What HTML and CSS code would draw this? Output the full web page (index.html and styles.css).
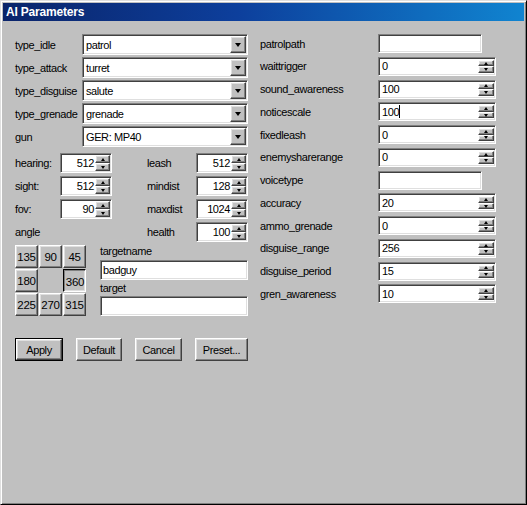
FILE: index.html
```html
<!DOCTYPE html>
<html>
<head>
<meta charset="utf-8">
<title>AI Parameters</title>
<link rel="stylesheet" href="styles.css">
</head>
<body>
<div class="window">
  <div class="titlebar">AI Parameters</div>
  <div class="content">
    <div class="left">
      <div class="combos">
        <span class="lbl">type_idle</span>
        <div class="combo"><span class="val">patrol</span><span class="dd"><i class="tri"></i></span></div>
        <span class="lbl">type_attack</span>
        <div class="combo"><span class="val">turret</span><span class="dd"><i class="tri"></i></span></div>
        <span class="lbl">type_disguise</span>
        <div class="combo"><span class="val">salute</span><span class="dd"><i class="tri"></i></span></div>
        <span class="lbl">type_grenade</span>
        <div class="combo"><span class="val">grenade</span><span class="dd"><i class="tri"></i></span></div>
        <span class="lbl">gun</span>
        <div class="combo"><span class="val">GER: MP40</span><span class="dd"><i class="tri"></i></span></div>
      </div>

      <div class="spins">
        <span class="lbl">hearing:</span>
        <div class="spin"><span class="num">512</span><span class="ud"><b><i class="up"></i></b><b><i class="down"></i></b></span></div>
        <span class="lbl c4">leash</span>
        <div class="spin"><span class="num">512</span><span class="ud"><b><i class="up"></i></b><b><i class="down"></i></b></span></div>

        <span class="lbl">sight:</span>
        <div class="spin"><span class="num">512</span><span class="ud"><b><i class="up"></i></b><b><i class="down"></i></b></span></div>
        <span class="lbl c4">mindist</span>
        <div class="spin"><span class="num">128</span><span class="ud"><b><i class="up"></i></b><b><i class="down"></i></b></span></div>

        <span class="lbl">fov:</span>
        <div class="spin"><span class="num">90</span><span class="ud"><b><i class="up"></i></b><b><i class="down"></i></b></span></div>
        <span class="lbl c4">maxdist</span>
        <div class="spin"><span class="num">1024</span><span class="ud"><b><i class="up"></i></b><b><i class="down"></i></b></span></div>

        <span class="lbl">angle</span>
        <span class="lbl c4">health</span>
        <div class="spin"><span class="num">100</span><span class="ud"><b><i class="up"></i></b><b><i class="down"></i></b></span></div>
      </div>

      <div class="lower">
        <div class="angles">
          <span class="abtn">135</span>
          <span class="abtn">90</span>
          <span class="abtn">45</span>
          <span class="abtn">180</span>
          <span class="gap"></span>
          <span class="abtn pressed">360</span>
          <span class="abtn">225</span>
          <span class="abtn">270</span>
          <span class="abtn">315</span>
        </div>
        <div class="targets">
          <span class="tlbl first">targetname</span>
          <div class="edit"><span class="txt">badguy</span></div>
          <span class="tlbl">target</span>
          <div class="edit"></div>
        </div>
      </div>

      <div class="buttons">
        <span class="btn default w-apply"><span class="in">Apply</span></span>
        <span class="btn w-default">Default</span>
        <span class="btn w-cancel">Cancel</span>
        <span class="btn w-preset">Preset...</span>
      </div>
    </div>

    <div class="right">
      <span class="lbl">patrolpath</span>
      <div class="edit short"></div>

      <span class="lbl">waittrigger</span>
      <div class="edit"><span class="txt">0</span><span class="ud"><b><i class="up"></i></b><b><i class="down"></i></b></span></div>

      <span class="lbl">sound_awareness</span>
      <div class="edit"><span class="txt">100</span><span class="ud"><b><i class="up"></i></b><b><i class="down"></i></b></span></div>

      <span class="lbl">noticescale</span>
      <div class="edit"><span class="txt">100<span class="caret"></span></span><span class="ud"><b><i class="up"></i></b><b><i class="down"></i></b></span></div>

      <span class="lbl">fixedleash</span>
      <div class="edit"><span class="txt">0</span><span class="ud"><b><i class="up"></i></b><b><i class="down"></i></b></span></div>

      <span class="lbl">enemysharerange</span>
      <div class="edit"><span class="txt">0</span><span class="ud"><b><i class="up"></i></b><b><i class="down"></i></b></span></div>

      <span class="lbl">voicetype</span>
      <div class="edit short"></div>

      <span class="lbl">accuracy</span>
      <div class="edit"><span class="txt">20</span><span class="ud"><b><i class="up"></i></b><b><i class="down"></i></b></span></div>

      <span class="lbl">ammo_grenade</span>
      <div class="edit"><span class="txt">0</span><span class="ud"><b><i class="up"></i></b><b><i class="down"></i></b></span></div>

      <span class="lbl">disguise_range</span>
      <div class="edit"><span class="txt">256</span><span class="ud"><b><i class="up"></i></b><b><i class="down"></i></b></span></div>

      <span class="lbl">disguise_period</span>
      <div class="edit"><span class="txt">15</span><span class="ud"><b><i class="up"></i></b><b><i class="down"></i></b></span></div>

      <span class="lbl">gren_awareness</span>
      <div class="edit"><span class="txt">10</span><span class="ud"><b><i class="up"></i></b><b><i class="down"></i></b></span></div>
    </div>
  </div>
</div>
</body>
</html>
```

FILE: styles.css
```css
* { box-sizing: border-box; }
html, body { margin: 0; padding: 0; }
body {
  font-family: "Liberation Sans", Arial, sans-serif;
  font-size: 11px;
  letter-spacing: -0.4px;
  color: #000;
  background: #c0c0c0;
}

.window {
  width: 527px;
  height: 505px;
  background: #c0c0c0;
  border: 1px solid;
  border-color: #dfdfdf #000 #000 #dfdfdf;
  box-shadow: inset 1px 1px #fff, inset -1px -1px #808080;
  padding: 2px;
  display: flex;
  flex-direction: column;
}

.titlebar {
  height: 18px;
  background: linear-gradient(90deg, #0a246a 0%, #0d3f9c 45%, #1084d0 100%);
  color: #fff;
  font-weight: bold;
  font-size: 12px;
  letter-spacing: -0.2px;
  line-height: 18px;
  padding-left: 3px;
  flex: none;
}

.content {
  display: flex;
  gap: 12px;
  padding: 13px 0 0 12px;
}

.left { width: 233px; flex: none; }

.lbl { white-space: nowrap; }

/* sunken field */
.combo, .spin, .edit {
  background: #fff;
  border: 1px solid;
  border-color: #808080 #fff #fff #808080;
  box-shadow: inset 1px 1px #404040, inset -1px -1px #dfdfdf;
  padding: 1px;
  display: flex;
  align-items: center;
}

/* raised */
.dd, .ud b, .abtn, .btn {
  background: #c0c0c0;
  border: 1px solid;
  border-color: #fff #404040 #404040 #fff;
  box-shadow: inset -1px -1px #808080, inset 1px 1px #dfdfdf;
}

.combos {
  display: grid;
  grid-template-columns: 67px 166px;
  grid-auto-rows: 21px;
  row-gap: 2px;
  align-items: center;
}
.combo { height: 21px; }
.combo .val { flex: 1; padding-left: 2px; }
.dd {
  width: 16px;
  height: 17px;
  display: flex;
  align-items: center;
  justify-content: center;
}
.tri {
  display: block;
  width: 0; height: 0;
  border-style: solid;
  border-width: 4px 3.5px 0 3.5px;
  border-color: #000 transparent transparent transparent;
  margin-top: 1px;
}

.spins {
  display: grid;
  grid-template-columns: 45px 52px 35px 49px 52px;
  grid-auto-rows: 20px;
  row-gap: 3px;
  align-items: center;
  margin-top: 6px;
}
.c4 { grid-column: 4; }
.spin { height: 20px; }
.spin .num { flex: 1; text-align: right; padding-right: 1px; }

.ud {
  width: 15px;
  align-self: stretch;
  display: flex;
  flex-direction: column;
  flex: none;
}
.ud b {
  flex: 1;
  display: flex;
  align-items: center;
  justify-content: center;
  min-height: 0;
}
.up, .down {
  display: block;
  width: 0; height: 0;
  border-style: solid;
}
.up { border-width: 0 2.5px 3px 2.5px; border-color: transparent transparent #000 transparent; }
.down { border-width: 3px 2.5px 0 2.5px; border-color: #000 transparent transparent transparent; }

.lower {
  display: flex;
  margin-top: 3px;
}
.angles {
  display: grid;
  grid-template-columns: 23px 23px 23px;
  grid-auto-rows: 23px;
  gap: 1px;
}
.abtn {
  display: flex;
  align-items: center;
  justify-content: center;
  font-size: 11.5px;
  letter-spacing: -0.3px;
}
.abtn.pressed {
  border-color: #000 #fff #fff #000;
  box-shadow: inset 1px 1px #808080, inset -1px -1px #dfdfdf;
  padding: 2px 0 0 1px;
}

.targets {
  margin-left: 14px;
  width: 148px;
  display: flex;
  flex-direction: column;
}
.tlbl { height: 16px; line-height: 16px; }
.tlbl.first { height: 15px; line-height: 13px; }
.targets .edit { height: 20px; }
.txt { flex: 1; padding-left: 1px; white-space: nowrap; }

.buttons {
  display: flex;
  justify-content: space-between;
  margin-top: 22px;
}
.btn {
  height: 23px;
  display: flex;
  align-items: center;
  justify-content: center;
}
.btn.default {
  border: 1px solid #000;
  box-shadow: none;
  padding: 0;
}
.btn.default .in {
  width: 100%;
  height: 100%;
  display: flex;
  align-items: center;
  justify-content: center;
  border: 1px solid;
  border-color: #fff #404040 #404040 #fff;
  box-shadow: inset -1px -1px #808080, inset 1px 1px #dfdfdf;
}
.w-apply { width: 48px; }
.w-default { width: 46px; }
.w-cancel { width: 47px; }
.w-preset { width: 53px; }

.right {
  display: grid;
  grid-template-columns: 118px 118px;
  grid-auto-rows: 19px;
  row-gap: 3.75px;
  align-items: center;
  align-content: start;
}
.right .edit { height: 19px; }
.right .edit.short { width: 104px; }
.right .txt { padding-left: 2px; }
.right .ud { width: 16px; padding: 1px 0; }

.caret {
  display: inline-block;
  width: 1px;
  height: 13px;
  background: #000;
  vertical-align: -2px;
}
```
